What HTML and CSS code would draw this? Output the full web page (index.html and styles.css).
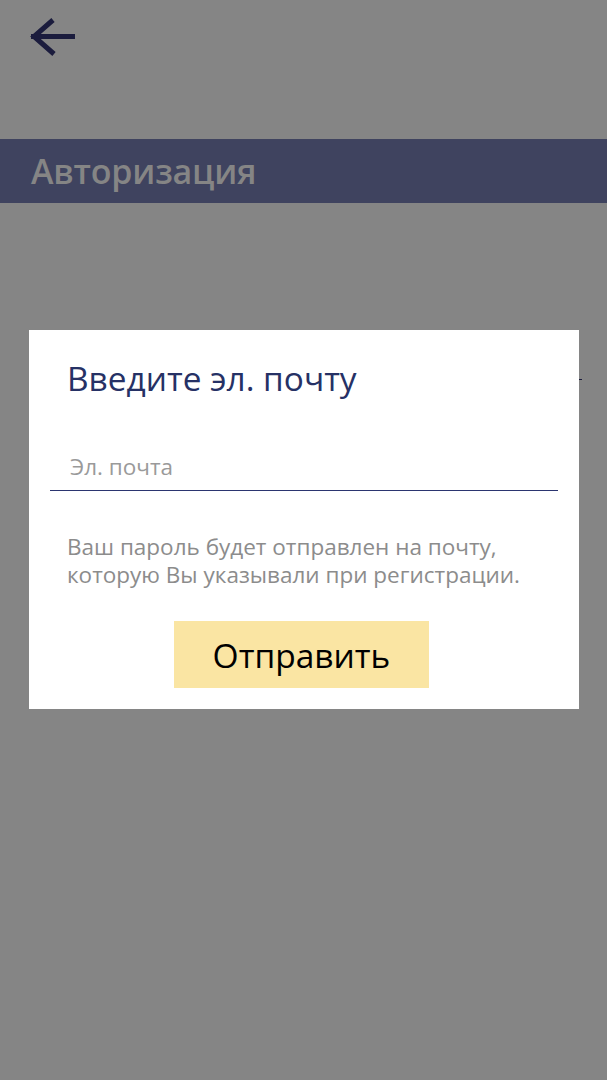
FILE: index.html
```html
<!DOCTYPE html>
<html lang="ru">
<head>
<meta charset="utf-8">
<link rel="stylesheet" href="styles.css">
</head>
<body>
<div class="page">
  <div class="topbar">
    <svg class="back" width="48" height="42" viewBox="0 0 48 42">
      <path d="M2 19.5 H46 M24 3 L5 19.5 L25 37" fill="none" stroke="#1b1c3d" stroke-width="5"/>
    </svg>
  </div>
  <div class="header"><span class="header-title">Авторизация</span></div>
  <div class="content">
    <div class="behind-line"></div>
    <div class="dialog">
      <h1 class="dialog-title">Введите эл. почту</h1>
      <div class="field"><span class="placeholder">Эл. почта</span></div>
      <p class="hint">Ваш пароль будет отправлен на почту,<br>которую Вы указывали при регистрации.</p>
      <div class="actions"><button class="send">Отправить</button></div>
    </div>
  </div>
</div>
</body>
</html>
```
FILE: styles.css
```css
html, body {
  margin: 0;
  padding: 0;
  background: #858585;
}
body {
  width: 607px;
  height: 1080px;
  overflow: hidden;
  font-family: "Open Sans", "Noto Sans", sans-serif;
}
.page {
  display: flex;
  flex-direction: column;
}
.topbar {
  height: 139px;
  padding: 17px 0 0 29px;
  box-sizing: border-box;
}
.back {
  display: block;
}
.header {
  height: 64px;
  background: #3f435f;
  display: flex;
  align-items: center;
  padding-left: 31px;
}
.header-title {
  color: #858585;
  font-size: 34px;
  font-weight: 600;
  letter-spacing: -0.2px;
}
.content {
  position: relative;
  padding: 127px 28px 0 29px;
}
.behind-line {
  position: absolute;
  left: 500px;
  width: 82px;
  top: 176px;
  height: 1px;
  background: #1b1c3d;
}
.dialog {
  position: relative;
  width: 550px;
  height: 379px;
  background: #ffffff;
  box-sizing: border-box;
  padding: 26px 21px 0 21px;
  display: flex;
  flex-direction: column;
}
.dialog-title {
  margin: 0 0 0 17px;
  font-weight: 400;
  font-size: 33.4px;
  line-height: 44px;
  color: #263165;
}
.field {
  margin-top: 50px;
  height: 41px;
  border-bottom: 1px solid #2b3570;
  box-sizing: border-box;
  padding-left: 20px;
}
.placeholder {
  font-size: 22.5px;
  line-height: 34px;
  color: #9a9a9a;
}
.hint {
  margin: 42px 0 0 17px;
  font-size: 22.5px;
  line-height: 28px;
  color: #8c8c8c;
  white-space: nowrap;
}
.actions {
  display: flex;
  justify-content: center;
  margin-top: 32px;
  padding-right: 5px;
}
.send {
  width: 255px;
  height: 67px;
  border: none;
  background: #fae5a3;
  font-family: inherit;
  font-size: 33.5px;
  color: #000;
  padding: 0;
}
```
